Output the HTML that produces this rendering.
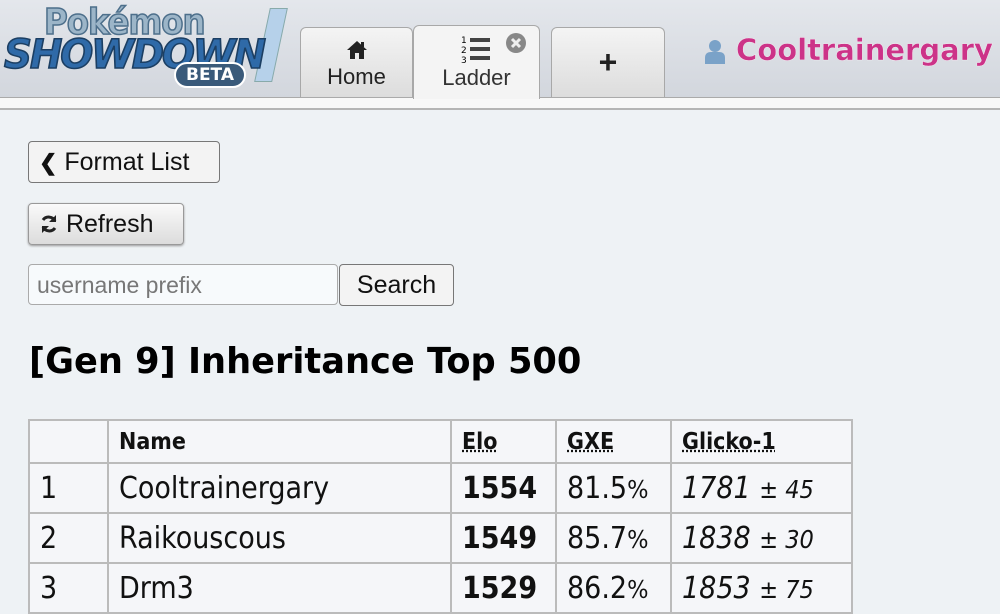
<!DOCTYPE html>
<html><head><meta charset="utf-8"><style>
*{box-sizing:border-box}
body{margin:0;width:1000px;height:608px;overflow:hidden;background:#eef2f5;font-family:"Liberation Sans",sans-serif;position:relative}
.hdr{position:absolute;left:0;top:0;width:1000px;height:98px;background:linear-gradient(#e4e7ec,#d2d6dd);}
.bar{position:absolute;left:0;top:97px;width:1000px;height:13px;background:#f8f8f8;border-top:1px solid #aaa;border-bottom:2px solid #b5b5b5}
.tab{position:absolute;top:27px;height:71px;border:1px solid #a8a8a8;border-bottom:none;border-radius:6px 6px 0 0;background:linear-gradient(#f4f4f4,#dcdcdc);text-align:center;font-size:22px;color:#222}
.logo1{position:absolute;left:44px;top:2px;font:bold 36px "DejaVu Sans Condensed",sans-serif;color:#9cb5c8;-webkit-text-stroke:1.5px #4d6f8b;letter-spacing:-1px}
.logo2{position:absolute;left:4px;top:32px;font:bold italic 40px "DejaVu Sans Condensed",sans-serif;color:#2f6aa8;-webkit-text-stroke:1.5px #1c3f63;letter-spacing:-2px;transform:scaleX(1.08);transform-origin:left}
.beta{position:absolute;left:174px;top:62px;width:72px;height:26px;border-radius:13px;background:#3a5a7a;border:2px solid #fff;color:#fff;font:bold 17px "DejaVu Sans",sans-serif;text-align:center;line-height:22px}
.bang{position:absolute;left:262px;top:8px;width:18px;height:74px;background:#b6d1ea;transform:skewX(-12deg);border:1px solid #8aa}
.btn{position:absolute;border:1px solid #777;border-radius:4px;background:#f3f3f3;font-size:25px;color:#111;padding:0 10px}
table{position:absolute;left:28px;top:419px;border-collapse:collapse;font-family:"DejaVu Sans Condensed",sans-serif;font-size:30px;color:#111;background:rgba(246,247,249,.85)}
td,th{border:2px solid #bbb;padding:0 10px;text-align:left;height:50px;white-space:nowrap}
th{height:43px;font-size:23px}
th u{text-decoration:underline dotted}
</style></head><body>
<div class="hdr"></div>
<div class="bang"></div>
<div class="logo1">Pokémon</div>
<div class="logo2">SHOWDOWN</div>
<div class="beta">BETA</div>
<div class="tab" style="left:300px;width:113px">
<svg width="22" height="20" viewBox="0 0 22 20" style="margin-top:12px"><path d="M11 1L1 10h3v9h5v-6h4v6h5v-9h3z" fill="#222"/><rect x="15" y="2" width="3" height="5" fill="#222"/></svg>
<div style="margin-top:-2px">Home</div></div>
<div class="tab" style="left:413px;width:127px;top:25px;height:74px;background:#f4f4f4;z-index:2;color:#333">
<svg width="32" height="30" viewBox="0 0 32 30" style="margin-top:8px"><text x="0" y="9" font-size="9" font-family="DejaVu Sans">1</text><text x="0" y="19" font-size="9" font-family="DejaVu Sans">2</text><text x="0" y="29" font-size="9" font-family="DejaVu Sans">3</text><rect x="9" y="4" width="20" height="4" fill="#444"/><rect x="9" y="13" width="20" height="4" fill="#444"/><rect x="9" y="22" width="20" height="4" fill="#444"/></svg>
<div style="margin-top:-5px">Ladder</div>
<svg width="22" height="22" style="position:absolute;left:91px;top:6px" viewBox="0 0 22 22"><circle cx="11" cy="11" r="10" fill="#888"/><path d="M7 7l8 8M15 7l-8 8" stroke="#eee" stroke-width="3"/></svg></div>
<div class="tab" style="left:551px;width:114px;font-size:32px;font-weight:bold;line-height:68px">+</div>
<svg width="22" height="26" viewBox="0 0 22 26" style="position:absolute;left:704px;top:39px"><circle cx="11" cy="7" r="6" fill="#7aa2c8"/><path d="M1 25v-6q0-6 6-6h8q6 0 6 6v6z" fill="#7aa2c8"/></svg>
<div style="position:absolute;left:736px;top:33px;font:bold 29px 'DejaVu Sans',sans-serif;color:#cc3388;-webkit-text-stroke:0.3px #fff">Cooltrainergary</div>
<div class="bar"></div>
<div class="btn" style="left:28px;top:141px;height:42px;line-height:40px;width:192px;white-space:nowrap"><b style="font-size:22px">❮</b> Format List</div>
<div class="btn" style="left:28px;top:203px;height:42px;line-height:40px;width:156px;background:linear-gradient(#fafafa,#dcdcdc);border-color:#999;box-shadow:0 1px 2px #999">
<svg width="20" height="20" viewBox="0 0 20 20" style="vertical-align:-2px"><path d="M16 7A7 7 0 0 0 4 6M4 13a7 7 0 0 0 12 1" stroke="#222" stroke-width="3" fill="none"/><path d="M17 1v7h-7zM3 19v-7h7z" fill="#222"/></svg> Refresh</div>
<div style="position:absolute;left:28px;top:264px;width:310px;height:41px;border:1px solid #aaa;border-radius:4px;background:#f7fafc;font-size:23px;color:#777;padding-left:8px;line-height:40px">username prefix</div>
<div class="btn" style="left:339px;top:264px;height:42px;line-height:40px;width:115px;text-align:center;padding:0">Search</div>
<div style="position:absolute;left:29px;top:341px;font:bold 35.2px 'DejaVu Sans',sans-serif;color:#000;white-space:nowrap">[Gen 9] Inheritance Top 500</div>
<table>
<tr><th style="width:79px"></th><th style="width:343px">Name</th><th style="width:105px"><u>Elo</u></th><th style="width:115px"><u>GXE</u></th><th style="width:181px"><u>Glicko-1</u></th></tr>
<tr><td>1</td><td>Cooltrainergary</td><td><b>1554</b></td><td>81.5<small>%</small></td><td><i>1781</i> <small>± <i>45</i></small></td></tr>
<tr><td>2</td><td>Raikouscous</td><td><b>1549</b></td><td>85.7<small>%</small></td><td><i>1838</i> <small>± <i>30</i></small></td></tr>
<tr><td>3</td><td>Drm3</td><td><b>1529</b></td><td>86.2<small>%</small></td><td><i>1853</i> <small>± <i>75</i></small></td></tr>
</table>
</body></html>
